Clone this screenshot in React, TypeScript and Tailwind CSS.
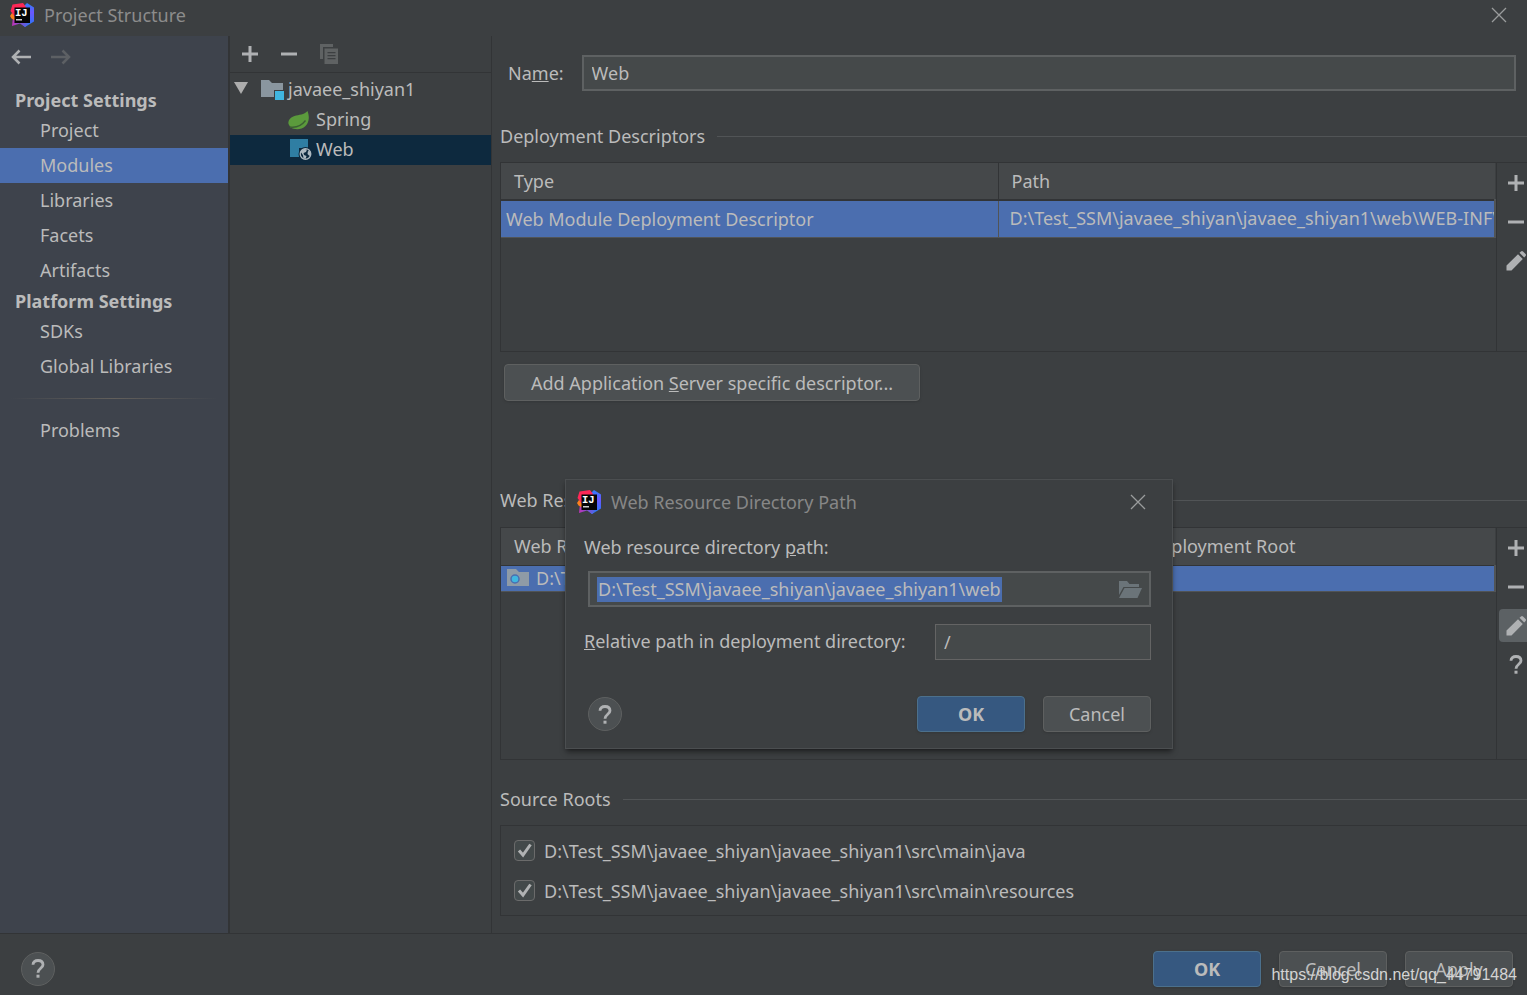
import React, { useState } from 'react';

const BASE = 'D:\\Test_SSM\\javaee_shiyan\\javaee_shiyan1';

const PROJECT_ITEMS = ['Project', 'Modules', 'Libraries', 'Facets', 'Artifacts'];
const PLATFORM_ITEMS = ['SDKs', 'Global Libraries'];

/* Icons */

const IdeaLogo = () => (
  <svg width="24" height="24" viewBox="0 0 24 24" aria-hidden="true">
    <defs>
      <linearGradient id="ideaBlue" x1="0" y1="0" x2="0" y2="1">
        <stop offset="0" stopColor="#2f7df6" />
        <stop offset="0.4" stopColor="#6b57ff" />
        <stop offset="1" stopColor="#1f7bf5" />
      </linearGradient>
      <linearGradient id="ideaPurple" x1="0" y1="0" x2="1" y2="0">
        <stop offset="0" stopColor="#c033b4" />
        <stop offset="1" stopColor="#3a6ff0" />
      </linearGradient>
    </defs>
    <path d="M13 4 17 0l7 4.500v14L15 24l-4-4z" fill="url(#ideaBlue)" />
    <path d="M3 14 2 23l8-2.500 5 3.500 5-5H6z" fill="url(#ideaPurple)" />
    <path d="M0 13 2 10l4 1v7l-4.500-2.500z" fill="#fc801d" />
    <path d="M2.500 1.500 13 0l3 4-2 5H6l-1 5L.5 8z" fill="#fe2857" />
    <rect x="4.500" y="4.500" width="15.500" height="15.500" fill="#050505" />
    <text x="5" y="12.500" fill="#ffffff" fontFamily="'Liberation Mono', monospace" fontWeight="700" fontSize="10.500">
      IJ
    </text>
    <rect x="6" y="16.200" width="6" height="1.200" fill="#ffffff" />
  </svg>
);

const CloseIcon = () => (
  <svg width="16" height="16" viewBox="0 0 16 16" fill="none" stroke="#9a9c9d" strokeWidth="1.300" aria-hidden="true">
    <path d="M1 1 15 15M15 1 1 15" />
  </svg>
);

const ArrowIcon = ({ flip, color }: { flip?: boolean; color: string }) => (
  <svg width="20" height="16" viewBox="0 0 20 16" fill="none" stroke={color} strokeWidth="2.500" aria-hidden="true">
    <path d={flip ? 'M0 8h18M11.500 1.500 18 8l-6.500 6.500' : 'M20 8H2M8.500 1.500 2 8l6.500 6.500'} />
  </svg>
);

const PlusIcon = () => (
  <svg width="16" height="16" viewBox="0 0 16 16" fill="#afb1b3" aria-hidden="true">
    <path d="M6.500 0h3v6.500H16v3H9.500V16h-3V9.500H0v-3h6.500z" />
  </svg>
);

const MinusIcon = () => (
  <svg width="16" height="16" viewBox="0 0 16 16" fill="#afb1b3" aria-hidden="true">
    <path d="M0 6.500h16v3H0z" />
  </svg>
);

const CopyIcon = () => (
  <svg width="18" height="20" viewBox="0 0 18 20" fill="#5f6263" aria-hidden="true">
    <path d="M0 0h13v3H3v12H0z" />
    <path fillRule="evenodd" d="M4.500 4.500H18V20H4.500zM7.500 8v1.300h8V8zm0 3v1.300h8V11zm0 3v1.300h8V14z" />
  </svg>
);

const PencilIcon = () => (
  <svg width="20" height="20" viewBox="0 0 20 20" fill="#afb1b3" aria-hidden="true">
    <path d="M.5 19.500v-5L12 3.200l4.800 4.800L5.500 19.500zM13.500 1.800 15 .4q1-.8 2 0L19.600 3q.8 1 0 2l-1.400 1.500z" />
  </svg>
);

const QuestionIcon = () => (
  <svg width="14" height="19" viewBox="0 0 14 19" fill="none" aria-hidden="true">
    <path d="M2 5.800C2 3 4 1.500 7 1.500s5 1.700 5 4.300c0 3.400-5 3.700-5 8" stroke="#afb1b3" strokeWidth="2.800" />
    <rect x="5.500" y="15.700" width="3" height="3" fill="#afb1b3" />
  </svg>
);

const ModuleIcon = () => (
  <svg width="24" height="22" viewBox="0 0 24 22" aria-hidden="true">
    <path d="M0 1h8l3 3h11v7h-9v7H0z" fill="#8a969f" />
    <rect x="14" y="12" width="9" height="9" fill="#40b6e0" />
  </svg>
);

const SpringIcon = () => (
  <svg width="22" height="20" viewBox="0 0 22 20" aria-hidden="true">
    <path d="M19.500 1C16 5 11 4.500 6.500 6 1.500 7.700 0 11 .5 14l2 3.500C7 20 13.500 20 17.500 16 21.500 12 21.500 6 19.500 1z" fill="#5b9a3c" />
    <path d="M2 17c6 1 12-2 15.500-6.500" fill="none" stroke="#3c5f33" strokeWidth="1.300" />
  </svg>
);

const WebIcon = () => (
  <svg width="22" height="22" viewBox="0 0 22 22" aria-hidden="true">
    <path d="M0 0h18v9H9v9H0z" fill="#2f7ea3" />
    <circle cx="15.500" cy="15" r="7" fill="#0d293e" />
    <circle cx="15.500" cy="15" r="5.300" fill="#0d293e" stroke="#aeb9c0" strokeWidth="1.300" />
    <path d="M10.500 12.500 14 9.800l3 .7-1 2.500-2.500 1 .5 2 2.500 1-1 3-2-.8-.5-3zM18 12l2.500.5.5 3-1.500 1.500-2-2z" fill="#aeb9c0" />
  </svg>
);

const ResourceFolderIcon = () => (
  <svg width="22" height="18" viewBox="0 0 22 18" aria-hidden="true">
    <path d="M0 0h9l3 3h10v14H0z" fill="#8f9ba6" />
    <circle cx="8" cy="10" r="4" fill="#40b6e0" stroke="#4b6eaf" strokeWidth="1.500" />
  </svg>
);

const OpenFolderIcon = () => (
  <svg width="23" height="17" viewBox="0 0 23 17" fill="#6b7479" aria-hidden="true">
    <path d="M0 0h8l2.500 3H20v3H4.500L0 14z" />
    <path d="M5.500 7H23l-4.500 10H0z" />
  </svg>
);

/* Controls */

interface ButtonProps {
  children: React.ReactNode;
  primary?: boolean;
  onClick?: () => void;
}

const DialogButton = ({ children, primary, onClick }: ButtonProps) => (
  <button
    type="button"
    onClick={onClick}
    className={`h-9 w-[108px] rounded border shadow-sm ${
      primary ? 'border-[#4c708c] bg-[#365880] font-bold' : 'border-[#5e6060] bg-[#4c5052]'
    }`}
  >
    {children}
  </button>
);

const HelpButton = () => (
  <button
    type="button"
    aria-label="Help"
    className="flex size-[34px] items-center justify-center rounded-full border border-[#5e6060] bg-[#4c5052]"
  >
    <QuestionIcon />
  </button>
);

const ToolButton = ({ label, active, children }: { label: string; active?: boolean; children: React.ReactNode }) => (
  <button
    type="button"
    aria-label={label}
    className={`flex h-[33px] w-[34px] shrink-0 items-center justify-center rounded ${active ? 'bg-[#5c6164]' : ''}`}
  >
    {children}
  </button>
);

const SectionTitle = ({ children }: { children: React.ReactNode }) => (
  <div className="flex h-7 items-center gap-3">
    <h2>{children}</h2>
    <div className="h-px flex-1 bg-[#515456]" />
  </div>
);

const NavItem = ({ label, active, onClick }: { label: string; active: boolean; onClick: () => void }) => (
  <li>
    <button
      type="button"
      onClick={onClick}
      className={`block h-[35px] w-full pb-0.5 pl-10 text-left ${active ? 'bg-[#4b6eaf]' : ''}`}
    >
      {label}
    </button>
  </li>
);

const SourceRoot = ({ path }: { path: string }) => (
  <label className="flex h-10 items-center gap-[9px]">
    <span className="grid pb-0.5">
      <input
        type="checkbox"
        defaultChecked
        className="peer col-start-1 row-start-1 size-[21px] appearance-none rounded-sm border border-[#6b6b6b] bg-[#43494a]"
      />
      <svg
        viewBox="0 0 21 21"
        fill="none"
        stroke="#b0b2b3"
        strokeWidth="3"
        className="pointer-events-none invisible col-start-1 row-start-1 size-[21px] peer-checked:visible"
        aria-hidden="true"
      >
        <path d="M5 10.500 9 15 16.500 4.500" />
      </svg>
    </span>
    {path}
  </label>
);

const ResourceDialog = ({ onClose }: { onClose: () => void }) => (
  <div
    role="dialog"
    aria-label="Web Resource Directory Path"
    className="absolute top-[479px] left-[565px] w-[608px] border border-[#4b4e50] bg-[#3c3f41] pb-4 shadow-md shadow-black/40"
  >
    <div className="flex h-[43px] items-center gap-2.5 pr-[26px] pl-[11px] text-[#878787]">
      <IdeaLogo />
      <span className="flex-1">Web Resource Directory Path</span>
      <button type="button" aria-label="Close dialog" onClick={onClose}>
        <CloseIcon />
      </button>
    </div>
    <div className="pr-[21px] pl-[18px]">
      <label htmlFor="dir-path" className="flex h-12 items-center whitespace-pre">
        Web resource directory <u>p</u>ath:
      </label>
      <div className="ml-1 flex h-9 items-center justify-between border-2 border-[#5e6162] bg-[#45494a] pr-[7px] pl-[7px]">
        <input
          id="dir-path"
          defaultValue={`${BASE}\\web`}
          className="field-sizing-content h-[25px] bg-[#4b6eaf] px-px outline-none"
        />
        <button type="button" aria-label="Browse">
          <OpenFolderIcon />
        </button>
      </div>
      <div className="mt-[17px] flex items-center justify-between">
        <label htmlFor="rel-path" className="pb-0.5">
          <u>R</u>elative path in deployment directory:
        </label>
        <input
          id="rel-path"
          defaultValue="/"
          className="h-9 w-[216px] border border-[#646464] bg-[#45494a] px-2 outline-none"
        />
      </div>
      <div className="mt-9 ml-1 flex items-center gap-[18px]">
        <HelpButton />
        <div className="flex-1" />
        <DialogButton primary onClick={onClose}>
          OK
        </DialogButton>
        <DialogButton onClick={onClose}>Cancel</DialogButton>
      </div>
    </div>
  </div>
);

const App: React.FC = () => {
  const [section, setSection] = useState('Modules');
  const [dialogOpen, setDialogOpen] = useState(true);

  return (
    <div className="relative flex min-h-screen flex-col overflow-hidden bg-[#3c3f41] font-['Noto_Sans','Noto_Sans_CJK_SC',sans-serif] text-lg leading-6 text-[#bbbbbb]">
      {/* Title bar */}
      <header className="flex h-9 items-center gap-2.5 pr-5 pb-1.5 pl-2.5 text-[#8c8c8c]">
        <IdeaLogo />
        <h1 className="flex-1">Project Structure</h1>
        <button type="button" aria-label="Close">
          <CloseIcon />
        </button>
      </header>

      <div className="flex flex-1">
        {/* Settings navigation */}
        <nav className="w-[230px] shrink-0 border-r-2 border-[#323436] bg-[#3e434c]">
          <div className="flex h-[51px] items-start gap-5 px-[11px] pt-[13px]">
            <button type="button" aria-label="Back">
              <ArrowIcon color="#afb1b3" />
            </button>
            <button type="button" aria-label="Forward" disabled>
              <ArrowIcon flip color="#5d6064" />
            </button>
          </div>
          <h2 className="h-[26px] pt-px pl-[15px] font-bold">Project Settings</h2>
          <ul>
            {PROJECT_ITEMS.map((item) => (
              <NavItem key={item} label={item} active={item === section} onClick={() => setSection(item)} />
            ))}
          </ul>
          <h2 className="h-[26px] pt-px pl-[15px] font-bold">Platform Settings</h2>
          <ul>
            {PLATFORM_ITEMS.map((item) => (
              <NavItem key={item} label={item} active={item === section} onClick={() => setSection(item)} />
            ))}
          </ul>
          <div className="mx-2.5 my-3.5 h-px bg-linear-to-r from-transparent via-[#625f5b] to-transparent" />
          <ul>
            <NavItem label="Problems" active={section === 'Problems'} onClick={() => setSection('Problems')} />
          </ul>
        </nav>

        {/* Module tree */}
        <aside className="w-[262px] shrink-0 border-r border-[#323436]">
          <div className="flex h-[37px] items-center gap-[23px] border-b border-[#323436] pl-3">
            <button type="button" aria-label="Add module">
              <PlusIcon />
            </button>
            <button type="button" aria-label="Remove module">
              <MinusIcon />
            </button>
            <button type="button" aria-label="Copy module" disabled>
              <CopyIcon />
            </button>
          </div>
          <ul className="pt-0.5">
            <li className="flex h-[30px] items-center pl-1">
              <svg width="14" height="12" viewBox="0 0 14 12" className="mr-[13px] mb-1" aria-hidden="true">
                <path d="M0 0h14L7 12z" fill="#adadad" />
              </svg>
              <ModuleIcon />
              <span className="pb-0.5 pl-[3px]">javaee_shiyan1</span>
            </li>
            <li className="flex h-[30px] items-center gap-1.5 pl-[58px]">
              <SpringIcon />
              <span className="pb-0.5">Spring</span>
            </li>
            <li className="flex h-[30px] items-center gap-1 bg-[#0d293e] pl-[60px]">
              <WebIcon />
              <span className="pb-0.5">Web</span>
            </li>
          </ul>
        </aside>

        {/* Facet editor */}
        <main className="min-w-0 flex-1 pt-[19px] pb-[17px] pl-2">
          <div className="flex items-center gap-[18px] pr-[11px] pl-2">
            <label htmlFor="facet-name">
              Na<u>m</u>e:
            </label>
            <input
              id="facet-name"
              defaultValue="Web"
              className="h-9 min-w-0 flex-1 border-2 border-[#5e6162] bg-[#45494a] px-2 outline-none"
            />
          </div>

          <section className="mt-[31px]">
            <SectionTitle>Deployment Descriptors</SectionTitle>
            <div className="mt-3 flex min-h-[190px] border-y border-l border-[#323436]">
              <div className="min-w-0 flex-1 border-r border-[#323436]">
                <table className="w-full table-fixed">
                  <thead>
                    <tr className="h-[37px] border-b-2 border-[#323436] bg-[#45484a] text-left">
                      <th className="border-r border-[#323436] pl-[13px] font-normal">Type</th>
                      <th className="pl-[13px] font-normal">Path</th>
                    </tr>
                  </thead>
                  <tbody>
                    <tr className="h-[37px] border-b border-[#515456] bg-[#4b6eaf]">
                      <td className="border-r border-[#515456] pl-[5px]">Web Module Deployment Descriptor</td>
                      <td className="overflow-hidden border-r-2 border-[#515456] pb-0.5 pl-[11px] whitespace-nowrap">
                        {`${BASE}\\web\\WEB-INF\\web.xml`}
                      </td>
                    </tr>
                  </tbody>
                </table>
              </div>
              <div className="flex w-[30px] flex-col gap-1.5 overflow-hidden pt-[3px] pl-0.5">
                <ToolButton label="Add descriptor">
                  <PlusIcon />
                </ToolButton>
                <ToolButton label="Remove descriptor">
                  <MinusIcon />
                </ToolButton>
                <ToolButton label="Edit descriptor">
                  <PencilIcon />
                </ToolButton>
              </div>
            </div>
            <button
              type="button"
              className="mt-3 ml-1 h-[37px] rounded border border-[#5e6060] bg-[#4c5052] px-[26px] shadow-sm"
            >
              Add Application <u>S</u>erver specific descriptor...
            </button>
          </section>

          <section className="mt-[85px]">
            <SectionTitle>Web Resource Directories</SectionTitle>
            <div className="mt-[13px] flex min-h-[233px] border-y border-l border-[#323436]">
              <div className="min-w-0 flex-1 border-r border-[#323436]">
                <table className="w-full table-fixed">
                  <thead>
                    <tr className="h-[37px] border-b border-[#323436] bg-[#45484a] text-left">
                      <th className="border-r border-[#323436] pl-[13px] font-normal">Web Resource Directory</th>
                      <th className="pl-[13px] font-normal">Path Relative to Deployment Root</th>
                    </tr>
                  </thead>
                  <tbody>
                    <tr className="h-[26px] border-b border-[#515456] bg-[#4b6eaf]">
                      <td className="pl-1.5">
                        <div className="flex items-center gap-[7px]">
                          <ResourceFolderIcon />
                          {`${BASE}\\web`}
                        </div>
                      </td>
                      <td className="border-r-2 border-[#515456] pl-[11px]">/</td>
                    </tr>
                  </tbody>
                </table>
              </div>
              <div className="flex w-[30px] flex-col gap-1.5 overflow-hidden pt-[3px] pl-0.5">
                <ToolButton label="Add directory">
                  <PlusIcon />
                </ToolButton>
                <ToolButton label="Remove directory">
                  <MinusIcon />
                </ToolButton>
                <ToolButton label="Edit directory" active>
                  <PencilIcon />
                </ToolButton>
                <ToolButton label="Help on directories">
                  <QuestionIcon />
                </ToolButton>
              </div>
            </div>
          </section>

          <section className="mt-[25px]">
            <SectionTitle>Source Roots</SectionTitle>
            <div className="mt-3 border-y border-l border-[#323436] pt-[5px] pb-1 pl-[13px]">
              <SourceRoot path={`${BASE}\\src\\main\\java`} />
              <SourceRoot path={`${BASE}\\src\\main\\resources`} />
            </div>
          </section>
        </main>
      </div>

      {/* Bottom bar */}
      <footer className="flex h-[62px] items-center gap-[18px] border-t border-[#323436] pt-2 pr-3.5 pl-[21px]">
        <HelpButton />
        <div className="flex-1" />
        <DialogButton primary>OK</DialogButton>
        <DialogButton>Cancel</DialogButton>
        <DialogButton>Apply</DialogButton>
      </footer>

      {dialogOpen && <ResourceDialog onClose={() => setDialogOpen(false)} />}

      <span className="pointer-events-none absolute right-2.5 bottom-2 font-['Liberation_Sans',sans-serif] text-base leading-6 text-[#d4d4d4]">
        https://blog.csdn.net/qq_44791484
      </span>
    </div>
  );
};

export default App;
